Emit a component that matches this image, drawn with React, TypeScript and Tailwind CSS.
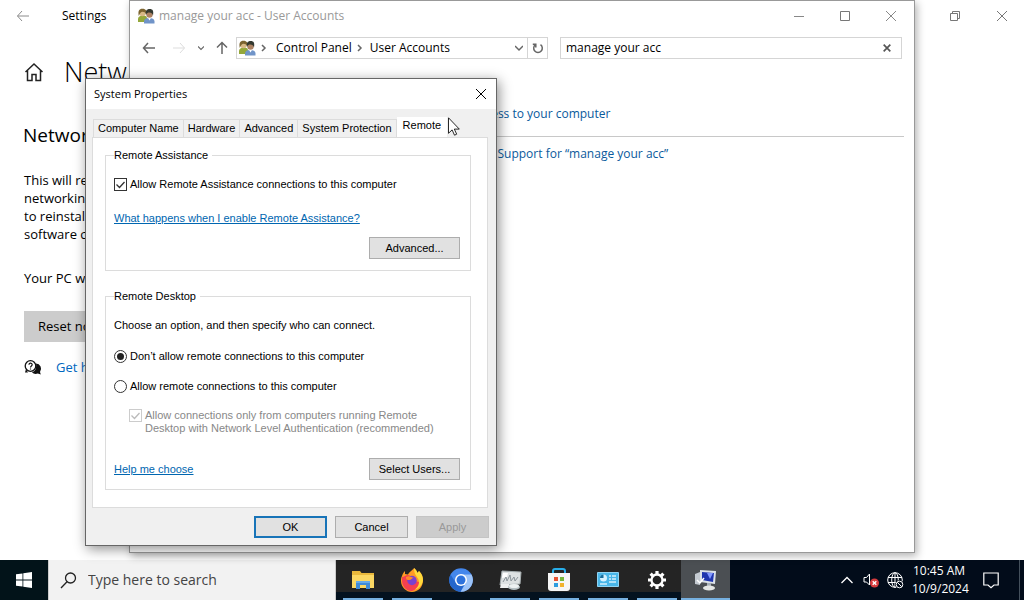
import type { ReactNode } from "react";
import clsx from "clsx";

const ui = "font-['Open_Sans','Noto_Sans',sans-serif]";
const classic = "font-['Liberation_Sans',Arial,sans-serif]";

function UsersIcon() {
  return (
    <svg viewBox="0 0 18 16" className="h-4 w-[18px] shrink-0" aria-hidden="true">
      <path d="M1 14v-3c0-2 2-3.500 5-3.500s4 1 4 3V14z" fill="#94a83a" />
      <circle cx="5.500" cy="5" r="3.200" fill="#d8b985" />
      <path d="M1.800 8C.8 3 2 .8 5.500.8s4.500 2.200 3.700 5.700C8.500 4.500 7 3.800 5.500 3.800S3 4.800 1.800 8z" fill="#7c6430" />
      <path d="M7 15.500v-2c0-2.500 2-3.500 5-3.500s5.500 1 5.500 3.500v2z" fill="#7094c8" />
      <circle cx="12.500" cy="6.500" r="3.200" fill="#ad8263" />
      <path d="M9 7C8.300 3 9.500 1 12.700 1S16.800 3 16 7.500C15.500 5.500 14 4.500 12.500 4.500S9.600 5 9 7z" fill="#33382f" />
      <path d="M11 10l1.500 2.500L14 10z" fill="#fff" />
    </svg>
  );
}

function CloseIcon({ className = "size-3" }: { className?: string }) {
  return (
    <svg viewBox="0 0 12 12" className={className} fill="none" stroke="currentColor" aria-hidden="true">
      <path d="M1 1l10 10M11 1L1 11" />
    </svg>
  );
}

function ArrowLeft({ className }: { className?: string }) {
  return (
    <svg viewBox="0 0 14 12" className={clsx("h-3 w-3.5", className)} fill="none" stroke="currentColor" aria-hidden="true">
      <path d="M6 1L1.500 6 6 11M1.500 6H13" />
    </svg>
  );
}

function SettingsWindow() {
  return (
    <main className={clsx(ui, "h-full bg-white text-black")}>
      <header className="flex h-8 items-center justify-between px-4">
        <div className="flex items-center gap-8">
          <button aria-label="Back" className="text-[#8c8c8c]"><ArrowLeft /></button>
          <span className="text-xs">Settings</span>
        </div>
        <div className="flex items-center gap-[35px] text-[#777]">
          <button aria-label="Restore">
            <svg viewBox="0 0 12 12" className="size-3" fill="none" stroke="currentColor" aria-hidden="true">
              <path d="M1.500 3.500h7v7h-7zM3.500 3.500v-2h7v7h-2" />
            </svg>
          </button>
          <button aria-label="Close"><CloseIcon /></button>
        </div>
      </header>
      <div className="w-32 overflow-hidden pt-6 pl-6 whitespace-nowrap">
        <div className="flex h-8 items-center gap-5">
          <svg viewBox="0 0 20 20" className="size-5 shrink-0" fill="none" stroke="#222" strokeWidth="1.500" aria-hidden="true">
            <path d="M1.500 10L10 2l8.500 8M3.500 8.500v10h4.500v-6h4v6h4.500v-10" />
          </svg>
          <h1 className="min-w-0 overflow-hidden text-[27px] leading-8 font-light">Network reset</h1>
        </div>
        <h2 className="mt-[35px] -ml-px w-16 overflow-hidden text-[19px] leading-6">Network reset</h2>
        <p className="mt-6 text-[13px] leading-[18px]">
          This will remove<br />networking<br />to reinstall<br />software client
        </p>
        <p className="mt-[26px] text-[13px] leading-[18px]">Your PC will</p>
        <button className="mt-6 h-[31px] bg-[#ccc] px-3.5 text-[13px]">Reset now</button>
        <a href="#help" className="mt-4 flex items-center gap-3.5 text-[13px] leading-[18px] text-[#0067c0]">
          <svg viewBox="0 0 18 16" className="h-4 w-[18px] shrink-0" aria-hidden="true">
            <path d="M1 13.500l1-3.500 2 3.500z" fill="#111" />
            <circle cx="6.500" cy="7" r="5.300" fill="#fff" stroke="#111" strokeWidth="1.300" />
            <path d="M5 5.800c0-2.400 3.200-2 3.200 0 0 1.200-1.700 1.200-1.700 2.600m0 1v1" fill="none" stroke="#111" strokeWidth="1.200" />
            <path d="M12 4.500a5.300 5.300 0 0 1 4 8.500l.8 2.500-3-1a5.300 5.300 0 0 1-6-1.500c3 0 5-3.500 4.200-8.500z" fill="#111" />
          </svg>
          Get help
        </a>
      </div>
    </main>
  );
}

function Chevron({ down, className }: { down?: boolean; className?: string }) {
  return (
    <svg viewBox="0 0 8 8" className={clsx("shrink-0", className)} fill="none" stroke="currentColor" strokeWidth="1.500" aria-hidden="true">
      <path d={down ? "M0 2l4 4 4-4" : "M2 1l3 3-3 3"} />
    </svg>
  );
}

function ControlPanelWindow() {
  return (
    <section
      aria-label="User Accounts"
      className={clsx(ui, "absolute top-0 left-[129px] h-[553px] w-[786px] border border-[#999] bg-white text-xs text-black shadow-[2px_3px_8px_rgba(0,0,0,0.3)]")}
    >
      <header className="flex h-[30px] items-center justify-between pr-[17px] pl-[7px] text-[#999]">
        <div className="flex items-center gap-1">
          <UsersIcon />
          <span>manage your acc - User Accounts</span>
        </div>
        <div className="flex items-center gap-[34px] text-[#888]">
          <button aria-label="Minimize">
            <svg viewBox="0 0 12 12" className="size-3" stroke="currentColor" aria-hidden="true"><path d="M1 6.500h10" /></svg>
          </button>
          <button aria-label="Maximize">
            <svg viewBox="0 0 12 12" className="size-3" fill="none" stroke="#777" aria-hidden="true"><path d="M1.500 1.500h9v9h-9z" /></svg>
          </button>
          <button aria-label="Close"><CloseIcon /></button>
        </div>
      </header>
      <div className="flex h-[34px] items-center px-3">
        <nav aria-label="History" className="flex w-[94px] shrink-0 items-center text-[#666]">
          <button aria-label="Back"><ArrowLeft className="stroke-[1.500]" /></button>
          <button aria-label="Forward" className="ml-4 text-[#ddd]"><ArrowLeft className="rotate-180" /></button>
          <button aria-label="Recent locations" className="ml-3"><Chevron down className="size-1.5" /></button>
          <button aria-label="Up" className="ml-3">
            <svg viewBox="0 0 12 14" className="h-3.5 w-3" fill="none" stroke="currentColor" strokeWidth="1.500" aria-hidden="true">
              <path d="M1 6.500L6 1.500l5 5M6 1.500V13" />
            </svg>
          </button>
        </nav>
        <div className="flex h-[22px] w-[312px] shrink-0 items-center border border-[#d5d5d5] pl-px text-[#666]">
          <UsersIcon />
          <Chevron className="ml-1 size-2" />
          <a href="#panel" className="ml-2 text-black">Control Panel</a>
          <Chevron className="ml-1 size-2" />
          <a href="#accounts" className="ml-1.5 text-black">User Accounts</a>
          <button aria-label="Previous locations" className="mr-1 ml-auto"><Chevron down className="size-2" /></button>
          <button aria-label="Refresh" className="flex h-full w-5 items-center justify-center border-l border-[#d5d5d5]">
            <svg viewBox="0 0 12 12" className="size-3" fill="none" stroke="currentColor" strokeWidth="1.500" aria-hidden="true">
              <path d="M8.500 2.700a4.300 4.300 0 1 1-5 0M3.800 5.500V2.300H.8" />
            </svg>
          </button>
        </div>
        <div className="ml-3 flex h-[22px] min-w-0 flex-1 items-center border border-[#d5d5d5] pr-2.5 pl-[5px]">
          <input type="text" aria-label="Search Control Panel" defaultValue="manage your acc" className="min-w-0 flex-1 outline-none" />
          <button aria-label="Clear search" className="text-[#555]"><CloseIcon className="size-2 stroke-[2.500]" /></button>
        </div>
      </div>
      <div className="mt-10 pr-2.5 pl-[343px] whitespace-nowrap text-[#0a5a9c]">
        <a href="#access" className="flex h-[18px] items-center">access to your computer</a>
        <hr className="mt-[13px] border-[#c8c8c8]" />
        <a href="#support" className="mt-2 flex h-[18px] items-center">and Support for “manage your acc”</a>
      </div>
    </section>
  );
}

function Mark({ type, id, disabled, checked }: { type: "checkbox" | "radio"; id: string; disabled?: boolean; checked?: boolean }) {
  return (
    <span className="grid size-[13px] shrink-0 place-items-center">
      <input
        id={id}
        type={type}
        name={type === "radio" ? "remote-desktop" : id}
        defaultChecked={checked}
        disabled={disabled}
        className={clsx(
          "peer col-start-1 row-start-1 size-[13px] appearance-none border bg-white",
          disabled ? "border-[#ccc]" : "border-[#333]",
          type === "radio" && "rounded-full",
        )}
      />
      {type === "radio" ? (
        <span className="pointer-events-none invisible col-start-1 row-start-1 size-[7px] rounded-full bg-[#222] peer-checked:visible" />
      ) : (
        <svg viewBox="0 0 13 13" className="pointer-events-none invisible col-start-1 row-start-1 size-[13px] peer-checked:visible" fill="none" stroke={disabled ? "#bbb" : "#333"} strokeWidth="1.300" aria-hidden="true">
          <path d="M2.500 6.500l3 3 5-5.500" />
        </svg>
      )}
    </span>
  );
}

function PushButton({ children, className, disabled }: { children: ReactNode; className?: string; disabled?: boolean }) {
  return (
    <button
      disabled={disabled}
      className={clsx("h-[22px]", className, disabled ? "border border-[#c4c4c4] bg-[#ccc] text-[#999]" : "bg-[#e1e1e1]")}
    >
      {children}
    </button>
  );
}

function SystemProperties() {
  const tabs = ["Computer Name", "Hardware", "Advanced", "System Protection"];
  return (
    <section
      role="dialog"
      aria-label="System Properties"
      className="absolute top-[78px] left-[85px] flex h-[468px] w-[412px] flex-col border border-[#666] bg-[#f0f0f0] text-black shadow-[2px_3px_12px_rgba(0,0,0,0.45)]"
    >
      <header className={clsx(ui, "flex h-[30px] shrink-0 items-center justify-between bg-white pr-[9px] pl-2 text-[11px]")}>
        <span>System Properties</span>
        <button aria-label="Close"><CloseIcon /></button>
      </header>
      <div className={clsx(classic, "flex flex-1 flex-col pr-2 pl-1.5 text-[11px] leading-[13px]")}>
        <div role="tablist" className="flex h-7 items-end pl-px">
          {tabs.map((tab) => (
            <button key={tab} role="tab" aria-selected="false" className="h-[18px] border-t border-r border-[#dcdcdc] px-1 whitespace-nowrap first:border-l">
              {tab}
            </button>
          ))}
          <button role="tab" aria-selected="true" className="h-5 bg-white px-1.5 pb-[3px]">Remote</button>
        </div>
        <div role="tabpanel" className="border border-[#dcdcdc] bg-white pt-2.5 pr-4 pb-[17px] pl-3">
          <fieldset className="h-[123px] min-w-0 border border-[#dcdcdc] pr-2.5 pl-2">
            <legend className="pr-1 leading-3.5">Remote Assistance</legend>
            <div className="flex items-center gap-[3px] pt-4">
              <Mark type="checkbox" id="assistance" checked />
              <label htmlFor="assistance">Allow Remote Assistance connections to this computer</label>
            </div>
            <a href="#assistance-help" className="mt-[21px] block text-[#0066b0] underline">What happens when I enable Remote Assistance?</a>
            <div className="mt-3 flex justify-end">
              <PushButton className="w-[91px] border border-[#adadad]">Advanced...</PushButton>
            </div>
          </fieldset>
          <fieldset className="mt-[18px] h-[201px] min-w-0 border border-[#dcdcdc] pr-2.5 pl-2">
            <legend className="pr-1 leading-3.5">Remote Desktop</legend>
            <p className="pt-4">Choose an option, and then specify who can connect.</p>
            <div className="mt-[18px] flex items-center gap-[3px]">
              <Mark type="radio" id="deny" checked />
              <label htmlFor="deny">Don’t allow remote connections to this computer</label>
            </div>
            <div className="mt-[17px] flex items-center gap-[3px]">
              <Mark type="radio" id="allow" />
              <label htmlFor="allow">Allow remote connections to this computer</label>
            </div>
            <div className="mt-4 flex gap-[3px] pl-[15px] text-[#888]">
              <Mark type="checkbox" id="nla" checked disabled />
              <label htmlFor="nla">Allow connections only from computers running Remote<br />Desktop with Network Level Authentication (recommended)</label>
            </div>
            <div className="mt-[23px] flex items-center justify-between">
              <a href="#choose" className="text-[#0066b0] underline">Help me choose</a>
              <PushButton className="w-[91px] border border-[#adadad]">Select Users...</PushButton>
            </div>
          </fieldset>
        </div>
        <footer className="mt-2 flex justify-end gap-2">
          <PushButton className="w-[73px] border-2 border-[#1874b8]">OK</PushButton>
          <PushButton className="w-[73px] border border-[#adadad]">Cancel</PushButton>
          <PushButton className="-mr-px w-[73px]" disabled>Apply</PushButton>
        </footer>
      </div>
    </section>
  );
}

function Cursor() {
  return (
    <svg viewBox="0 0 12 19" className="pointer-events-none absolute top-[117px] left-[448px] h-[19px] w-3" aria-hidden="true">
      <path d="M.5.8v15.500l3.600-3.400 2.400 5.300 2.200-1-2.400-5.100h5z" fill="#fff" stroke="#111" strokeWidth=".9" />
    </svg>
  );
}

const apps: { name: string; state: "open" | "idle" | "active"; icon: ReactNode }[] = [
  {
    name: "File Explorer",
    state: "open",
    icon: (
      <>
        <path d="M1 3h8l1.500 2H23v15H1z" fill="#e9b83c" />
        <path d="M1 7h22v13H1z" fill="#fbd763" />
        <path d="M5 21v-8h14v8h-4v-4H9v4z" fill="#3f8bd8" />
        <path d="M5 13h14v2H5z" fill="#65aaea" />
      </>
    ),
  },
  {
    name: "Firefox",
    state: "open",
    icon: (
      <>
        <path d="M2 8c1-3 2-4 3-5v3l3 .5C10 3 13 2 14 0c2 2 3 3 3.500 5L19 3c3 3 4 6 4 9.500C23 19 18 24 12 24S1 19 1 13c0-2 0-3 1-5z" fill="#ff9a24" />
        <path d="M2 9c2 0 4-2 6-2l5 2c-3 .5-3 2-3 3l9 2c0 5-4 8-7 9-6 0-10-5-10-10z" fill="#f5404f" />
        <path d="M19 3c3 3 4 6 4 9.500-1 5-4 8-8 9 4-3 5-7 3-11-2-3-4-5-4-10.500 2 2 3 3 3.500 5z" fill="#ffda3c" />
        <circle cx="12" cy="12.500" r="4.700" fill="#7941cf" />
        <path d="M6 9c3-2 5 0 8 1-3 0-2 2-5 2s-3-1-3-3z" fill="#ff8b26" />
      </>
    ),
  },
  {
    name: "Chromium",
    state: "idle",
    icon: (
      <>
        <circle cx="12" cy="12" r="11.800" fill="#4487ec" />
        <path d="M12 6.500h10.500A11.800 11.800 0 0 1 11.500 23.800L17 15z" fill="#9cc3f8" />
        <path d="M1.500 6.500A11.800 11.800 0 0 0 11.500 23.800L16 15l-9 0z" fill="#2567cc" />
        <circle cx="12" cy="12" r="6" fill="#fff" />
        <circle cx="12" cy="12" r="4.500" fill="#2d72dc" />
      </>
    ),
  },
  {
    name: "System Monitor",
    state: "open",
    icon: (
      <>
        <path d="M4 3l19 1-1 12-20 1z" fill="#dde1e2" stroke="#a4acae" />
        <path d="M5 5h5L9 9l-5 1z" fill="#fff" />
        <path d="M5 14l3-5 1 4 3-6 1 6 3-4 1 4 3-4" fill="none" stroke="#8b949a" />
        <path d="M3 16h8l1 4H2z" fill="#eef0f0" />
        <ellipse cx="16" cy="19" rx="6" ry="3" fill="#b4bec2" />
        <ellipse cx="16" cy="18" rx="5" ry="2" fill="#edf1f2" />
      </>
    ),
  },
  {
    name: "Microsoft Store",
    state: "open",
    icon: (
      <>
        <path d="M6 6V3q0-2 2-2h8q2 0 2 2v3" fill="none" stroke="#27aeea" strokeWidth="2" />
        <path d="M1 5h22v15q0 3-3 3H4q-3 0-3-3z" fill="#f6f6f6" />
        <path d="M7 9h4v4H7z" fill="#e85333" />
        <path d="M13 9h4v4h-4z" fill="#76b83b" />
        <path d="M7 15h4v4H7z" fill="#2e9de0" />
        <path d="M13 15h4v4h-4z" fill="#f2b32d" />
      </>
    ),
  },
  {
    name: "Control Panel",
    state: "open",
    icon: (
      <>
        <path d="M1.500 4.500h21v14h-21z" fill="#49b6e8" stroke="#8fd3f2" />
        <circle cx="7.500" cy="10" r="3.500" fill="#d6f2ff" />
        <path d="M7.500 10V6.500A3.500 3.500 0 0 0 4 10z" fill="#176f9e" />
        <path d="M13 8h2m1 0h4M13 11h2m1 0h4M13 14h7M4 16h7" stroke="#d3f0fc" strokeWidth="1.500" />
      </>
    ),
  },
  {
    name: "Settings",
    state: "open",
    icon: (
      <>
        <circle cx="12" cy="12" r="5.500" fill="none" stroke="#fff" strokeWidth="2.300" />
        <path d="M12 3v3M12 18v3M3 12h3M18 12h3M5.600 5.600l2.200 2.200M16.200 16.200l2.200 2.200M5.600 18.400l2.200-2.200M16.200 7.800l2.200-2.200" stroke="#fff" strokeWidth="3.200" />
      </>
    ),
  },
  {
    name: "System Properties",
    state: "active",
    icon: (
      <>
        <path d="M1 6l5-2v13l-5-1z" fill="#c4cad1" />
        <path d="M6 2l16 1-1 13-15-2z" fill="#dce2e8" />
        <path d="M8 4l12 1-1 9-11-2z" fill="#2036ae" />
        <path d="M13 5l6 0-3 6z" fill="#8298ff" />
        <path d="M13 15h4v4h-4z" fill="#a7afb7" />
        <ellipse cx="15" cy="20" rx="6" ry="2.500" fill="#e5e7e5" />
        <path d="M3 12l3 3 4-5" fill="none" stroke="#fff" strokeWidth="1.500" />
      </>
    ),
  },
];

function Taskbar() {
  return (
    <footer className={clsx(ui, "flex h-10 shrink-0 bg-[#020c1a] text-white")}>
      <button aria-label="Start" className="flex w-12 shrink-0 items-center justify-center bg-[#021319]">
        <svg viewBox="0 0 16 16" className="size-4" fill="#fff" aria-hidden="true">
          <path d="M0 2.300L6.500 1.400v6.200H0zM7.300 1.300L16 0v7.600H7.300zM0 8.400h6.500v6.200L0 13.700zM7.300 8.400H16V16l-8.700-1.300z" />
        </svg>
      </button>
      <label className="flex w-72 shrink-0 items-center gap-[11px] border-x border-[#ccc] bg-[#f2f2f2] pl-[11px]">
        <svg viewBox="0 0 17 17" className="size-[17px] shrink-0" fill="none" stroke="#222" strokeWidth="1.300" aria-hidden="true">
          <circle cx="10.500" cy="6" r="5" />
          <path d="M7 9.700L1 16" />
        </svg>
        <input type="text" aria-label="Search" placeholder="Type here to search" className="min-w-0 flex-1 text-sm outline-none placeholder:text-[#444]" />
      </label>
      <div className="flex bg-linear-to-b from-[#242424] from-80% to-[#04121f] to-80% pl-0.5">
        {apps.map(({ name, state, icon }) => (
          <button key={name} aria-label={name} className={clsx("flex w-[49px] flex-col items-center", state === "active" && "bg-[#4b4f53]")}>
            <span className="flex h-[38px] items-center pt-0.5">
              <svg viewBox="0 0 24 24" className="size-6" aria-hidden="true">{icon}</svg>
            </span>
            <span className={clsx("h-0.5 bg-[#76b0e0]", state === "open" && "w-10", state === "active" && "w-full", state === "idle" && "w-0")} />
          </button>
        ))}
      </div>
      <div className="ml-auto flex items-center">
        <button aria-label="Show hidden icons">
          <svg viewBox="0 0 12 8" className="h-2 w-3" fill="none" stroke="#fff" strokeWidth="1.300" aria-hidden="true"><path d="M.5 7L6 1.500 11.500 7" /></svg>
        </button>
        <button aria-label="Volume muted" className="ml-2.5">
          <svg viewBox="0 0 16 16" className="size-4" aria-hidden="true">
            <path d="M1 5.500h2.500L6.500 2v11l-3-3H1z" fill="none" stroke="#fff" />
            <circle cx="11.500" cy="11" r="4.500" fill="#d63b3d" />
            <path d="M9.700 9.200l3.600 3.600M13.300 9.200l-3.600 3.600" stroke="#fff" strokeWidth="1.400" />
          </svg>
        </button>
        <button aria-label="Network" className="ml-2">
          <svg viewBox="0 0 17 17" className="size-[17px]" fill="none" stroke="#fff" aria-hidden="true">
            <circle cx="8" cy="8" r="7.300" />
            <ellipse cx="8" cy="8" rx="3.300" ry="7.300" />
            <path d="M1 5.500h14M1 10.500h14M8 1v14" />
            <circle cx="12.500" cy="12.500" r="4.300" fill="#020c1a" stroke="none" />
            <circle cx="12.500" cy="12.500" r="3.300" />
            <path d="M10.300 10.300l4.400 4.400" />
          </svg>
        </button>
        <button className="ml-2 w-[54px] pb-px text-center text-xs leading-[18px] whitespace-nowrap">
          10:45 AM<br />10/9/2024
        </button>
        <button aria-label="Notifications" className="mr-5 ml-[17px]">
          <svg viewBox="0 0 16 17" className="h-[17px] w-4" fill="none" stroke="#fff" strokeWidth="1.200" aria-hidden="true">
            <path d="M.8 1h14.400v12H11l-3 2.800L5 13H.8z" />
          </svg>
        </button>
        <span className="mr-1 h-10 w-px bg-[#44505c]" />
      </div>
    </footer>
  );
}

export default function App() {
  return (
    <div className="flex h-screen flex-col overflow-hidden">
      <div className="relative min-h-0 flex-1">
        <SettingsWindow />
        <ControlPanelWindow />
        <SystemProperties />
        <Cursor />
      </div>
      <Taskbar />
    </div>
  );
}
